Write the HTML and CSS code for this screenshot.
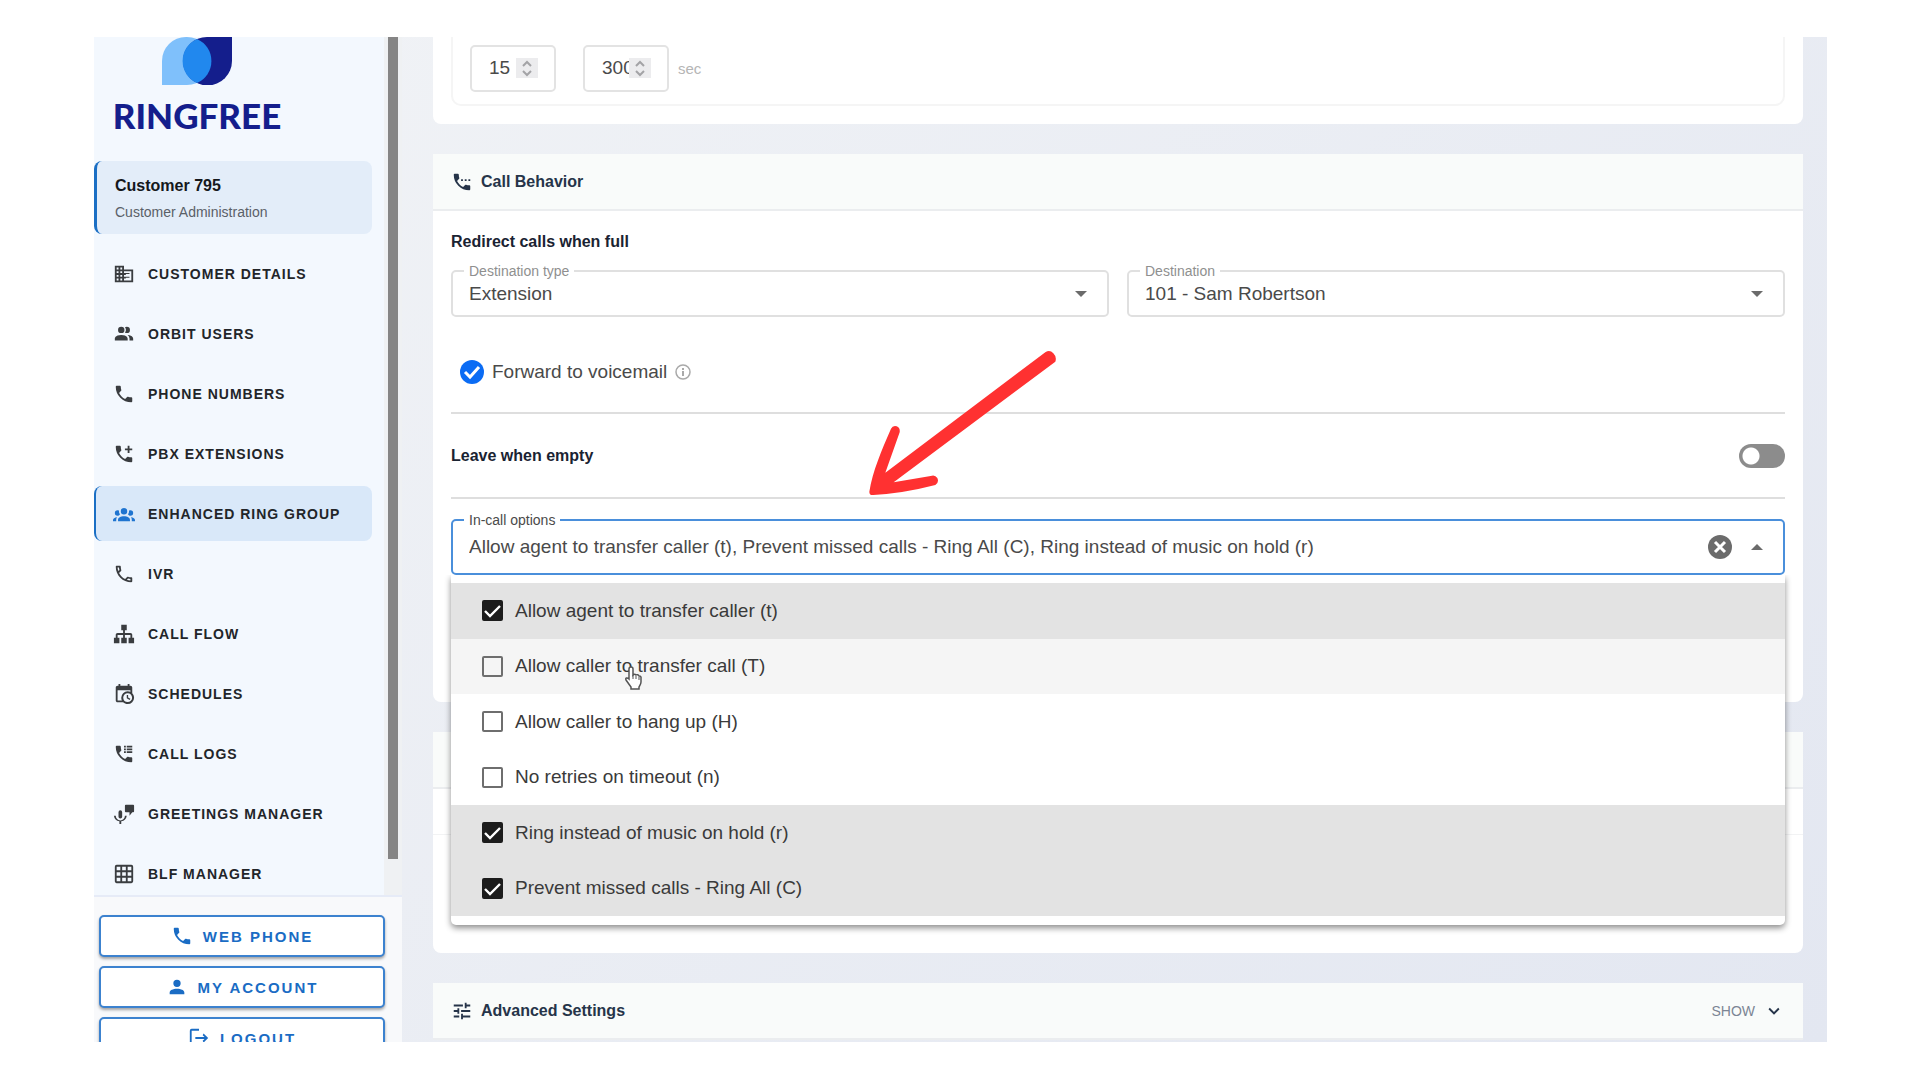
FILE: index.html
```html
<!doctype html>
<html lang="en">
<head>
	<meta charset="utf-8"/>
	<title>Ringfree - Enhanced Ring Group</title>
	<link rel="stylesheet" href="styles.css">
</head>
<body>

	<!-- shared icon shapes -->
	<svg class="sprite" aria-hidden="true">
		<symbol id="i-domain" viewBox="0 0 24 24"><path d="M12 7V3H2v18h20V7H12zM6 19H4v-2h2v2zm0-4H4v-2h2v2zm0-4H4V9h2v2zm0-4H4V5h2v2zm4 12H8v-2h2v2zm0-4H8v-2h2v2zm0-4H8V9h2v2zm0-4H8V5h2v2zm10 12h-8v-2h2v-2h-2v-2h2v-2h-2V9h8v10zm-2-8h-4v1h4v-1zm0 4h-4v1h4v-1z"/></symbol>
		<symbol id="i-users" viewBox="0 0 24 24"><path d="M16 17V19H2V17S2 13 9 13 16 17 16 17M12.5 7.5A3.5 3.5 0 1 0 9 11A3.5 3.5 0 0 0 12.5 7.5M15.94 13A5.32 5.32 0 0 1 18 17V19H22V17S22 13.37 15.94 13M15 4A3.39 3.39 0 0 0 13.07 4.59A5 5 0 0 1 13.07 10.41A3.39 3.39 0 0 0 15 11A3.5 3.5 0 0 0 15 4Z"/></symbol>
		<symbol id="i-phone" viewBox="0 0 24 24"><path d="M6.62 10.79C8.06 13.62 10.38 15.94 13.21 17.38L15.41 15.18C15.69 14.9 16.08 14.82 16.43 14.93C17.55 15.3 18.75 15.5 20 15.5A1 1 0 0 1 21 16.5V20A1 1 0 0 1 20 21A17 17 0 0 1 3 4A1 1 0 0 1 4 3H7.5A1 1 0 0 1 8.5 4C8.5 5.25 8.7 6.45 9.07 7.57C9.18 7.92 9.1 8.31 8.82 8.59L6.62 10.79Z"/></symbol>
		<symbol id="i-phone-outline" viewBox="0 0 24 24"><path d="M20,15.5C18.8,15.5 17.5,15.3 16.4,14.9C16.3,14.9 16.2,14.9 16.1,14.9C15.8,14.9 15.6,15 15.4,15.2L13.2,17.4C10.4,15.9 8,13.6 6.6,10.8L8.8,8.6C9.1,8.3 9.2,7.9 9,7.6C8.7,6.5 8.5,5.2 8.5,4C8.5,3.5 8,3 7.5,3H4C3.5,3 3,3.5 3,4C3,13.4 10.6,21 20,21C20.5,21 21,20.5 21,20V16.5C21,16 20.5,15.5 20,15.5M5,5H6.5C6.6,5.9 6.8,6.8 7,7.6L5.8,8.8C5.4,7.6 5.1,6.3 5,5M19,19C17.7,18.9 16.4,18.6 15.2,18.2L16.4,17C17.2,17.2 18.1,17.4 19,17.4V19Z"/></symbol>
		<symbol id="i-phone-plus" viewBox="0 0 24 24"><use href="#i-phone"/><path d="M13 6h3V3h2v3h3v2h-3v3h-2V8h-3z"/></symbol>
		<symbol id="i-phone-log" viewBox="0 0 24 24"><use href="#i-phone"/><path d="M12 3h2v2h-2zM15 3h6v2h-6zM12 6h2v2h-2zM15 6h6v2h-6zM12 9h2v2h-2zM15 9h6v2h-6z"/></symbol>
		<symbol id="i-phone-dots" viewBox="0 0 24 24"><use href="#i-phone"/><path d="M11 9h2v2h-2zM15 9h2v2h-2zM19 9h2v2h-2z"/></symbol>
		<symbol id="i-group" viewBox="0 0 24 24"><path d="M12 5.5A3.5 3.5 0 0 1 15.5 9A3.5 3.5 0 0 1 12 12.5A3.5 3.5 0 0 1 8.5 9A3.5 3.5 0 0 1 12 5.5M5 8C5.56 8 6.08 8.15 6.53 8.42C6.38 9.85 6.8 11.27 7.66 12.38C7.16 13.34 6.16 14 5 14A3 3 0 0 1 2 11A3 3 0 0 1 5 8M19 8A3 3 0 0 1 22 11A3 3 0 0 1 19 14C17.84 14 16.84 13.34 16.34 12.38C17.2 11.27 17.62 9.85 17.47 8.42C17.92 8.15 18.44 8 19 8M5.5 18.25C5.5 16.18 8.41 14.5 12 14.5C15.59 14.5 18.5 16.18 18.5 18.25V20H5.5V18.25M0 20V18.5C0 17.11 1.89 15.94 4.45 15.6C3.86 16.28 3.5 17.22 3.5 18.25V20H0M24 20H20.5V18.25C20.5 17.22 20.14 16.28 19.55 15.6C22.11 15.94 24 17.11 24 18.5V20Z"/></symbol>
		<symbol id="i-sitemap" viewBox="0 0 24 24"><path d="M9 2V8H11V11H5C3.89 11 3 11.89 3 13V16H1V22H7V16H5V13H11V16H9V22H15V16H13V13H19V16H17V22H23V16H21V13C21 11.89 20.11 11 19 11H13V8H15V2H9Z"/></symbol>
		<symbol id="i-schedule" viewBox="0 0 24 24"><path d="M15 13H16.5V15.82L18.94 17.23L18.19 18.53L15 16.69V13M19 8H5V19H9.67C9.24 18.09 9 17.07 9 16A7 7 0 0 1 16 9C17.07 9 18.09 9.24 19 9.67V8M5 21C3.89 21 3 20.1 3 19V5C3 3.89 3.89 3 5 3H6V1H8V3H16V1H18V3H19A2 2 0 0 1 21 5V11.1C22.24 12.36 23 14.09 23 16A7 7 0 0 1 16 23C14.09 23 12.36 22.24 11.1 21H5M16 11.15A4.85 4.85 0 0 0 11.15 16C11.15 18.68 13.32 20.85 16 20.85A4.85 4.85 0 0 0 20.85 16C20.85 13.32 18.68 11.15 16 11.15Z"/></symbol>
		<symbol id="i-mic" viewBox="0 0 24 24"><path d="M14 2h8a1 1 0 0 1 1 1v6a1 1 0 0 1-1 1h-1l-3 4v-4h-4a1 1 0 0 1-1-1V3a1 1 0 0 1 1-1zM8 8a2 2 0 0 1 2 2v5a2 2 0 0 1-4 0v-5a2 2 0 0 1 2-2zM1 14h2a5 5 0 0 0 10 0h2a7 7 0 0 1-6 6v3H7v-3a7 7 0 0 1-6-6z"/></symbol>
		<symbol id="i-grid" viewBox="0 0 24 24"><path d="M10 4v4h4V4h-4m6 0v4h4V4h-4m0 6v4h4v-4h-4m0 6v4h4v-4h-4m-2 4v-4h-4v4h4m-6 0v-4H4v4h4m0-6v-4H4v4h4m0-6V4H4v4h4m2 6h4v-4h-4v4M4 2h16a2 2 0 0 1 2 2v16a2 2 0 0 1-2 2H4c-1.08 0-2-.9-2-2V4a2 2 0 0 1 2-2z"/></symbol>
		<symbol id="i-account" viewBox="0 0 24 24"><path d="M12 4a4 4 0 0 1 0 8 4 4 0 0 1 0-8m0 10c4.42 0 8 1.79 8 4v2H4v-2c0-2.21 3.58-4 8-4"/></symbol>
		<symbol id="i-logout" viewBox="0 0 24 24"><path d="M12 2v2H4v16h8v2H4a2 2 0 0 1-2-2V4a2 2 0 0 1 2-2zM17 7l5 5-5 5-1-2 2-2H8v-2h10l-2-2z"/></symbol>
		<symbol id="i-tune" viewBox="0 0 24 24"><path d="M3 17v2h6v-2H3zM3 5v2h10V5H3zm10 16v-2h8v-2h-8v-2h-2v6h2zM7 9v2H3v2h4v2h2V9H7zm14 4v-2H11v2h10zm-6-4h2V7h4V5h-4V3h-2v6z"/></symbol>
		<symbol id="i-chevron" viewBox="0 0 24 24"><path d="M7.41 8.58L12 13.17l4.59-4.59L18 10l-6 6-6-6z"/></symbol>
		<symbol id="i-spin" viewBox="0 0 22 20"><path d="M7 8l4-4 4 4M7 13l4 4 4-4" fill="none" stroke="#a3a3a6" stroke-width="2"/></symbol>
	</svg>

	<div class="app">
		<aside class="sidebar">
			<div class="sidebar-scroll">
				<div class="sidebar-content">
					<div class="logo">
						<svg class="logo-mark" viewBox="0 0 70 48">
							<path fill="#7fc0fb" d="M0 48V24A24 24 0 0 1 24 0h1a24 24 0 0 1 0 48z"/>
							<path fill="#141e8c" d="M70 0v24a24 24 0 0 1-49 0A24 24 0 0 1 45 0z"/>
							<path fill="#2188ee" d="M35 2a24 24 0 0 1 0 44 24 24 0 0 1 0-44z"/>
						</svg>
						<span class="logo-text">RINGFREE</span>
					</div>
					<div class="customer">
						<strong>Customer 795</strong>
						<span>Customer Administration</span>
					</div>
					<nav class="menu">
						<a href="#"><svg><use href="#i-domain"/></svg>CUSTOMER DETAILS</a>
						<a href="#"><svg><use href="#i-users"/></svg>ORBIT USERS</a>
						<a href="#"><svg><use href="#i-phone"/></svg>PHONE NUMBERS</a>
						<a href="#"><svg><use href="#i-phone-plus"/></svg>PBX EXTENSIONS</a>
						<a href="#" class="active"><svg><use href="#i-group"/></svg>ENHANCED RING GROUP</a>
						<a href="#"><svg><use href="#i-phone-outline"/></svg>IVR</a>
						<a href="#"><svg><use href="#i-sitemap"/></svg>CALL FLOW</a>
						<a href="#"><svg><use href="#i-schedule"/></svg>SCHEDULES</a>
						<a href="#"><svg><use href="#i-phone-log"/></svg>CALL LOGS</a>
						<a href="#"><svg><use href="#i-mic"/></svg>GREETINGS MANAGER</a>
						<a href="#"><svg><use href="#i-grid"/></svg>BLF MANAGER</a>
					</nav>
				</div>
				<div class="scroll-track"><div class="scroll-thumb"></div></div>
			</div>
			<div class="sidebar-actions">
				<button type="button"><svg><use href="#i-phone"/></svg>WEB PHONE</button>
				<button type="button"><svg><use href="#i-account"/></svg>MY ACCOUNT</button>
				<button type="button"><svg><use href="#i-logout"/></svg>LOGOUT</button>
			</div>
		</aside>

		<main class="content">
			<section class="card card-first">
				<div class="timing">
					<div class="number">
						<input type="number" value="15" aria-label="Ring time">
						<svg><use href="#i-spin"/></svg>
					</div>
					<div class="number">
						<input type="number" value="300" aria-label="Maximum wait">
						<svg><use href="#i-spin"/></svg>
					</div>
					<span class="unit">sec</span>
				</div>
			</section>

			<section class="card">
				<h2 class="card-header"><svg><use href="#i-phone-dots"/></svg>Call Behavior</h2>
				<div class="card-body">
					<h3>Redirect calls when full</h3>
					<div class="fields">
						<div class="field">
							<label for="dest-type">Destination type</label>
							<select id="dest-type"><option>Extension</option></select>
							<svg class="caret" viewBox="0 0 12 6"><path d="M0 0h12L6 6z"/></svg>
						</div>
						<div class="field">
							<label for="dest">Destination</label>
							<select id="dest"><option>101 - Sam Robertson</option></select>
							<svg class="caret" viewBox="0 0 12 6"><path d="M0 0h12L6 6z"/></svg>
						</div>
					</div>
					<div class="voicemail">
						<input type="checkbox" id="voicemail" checked>
						<label for="voicemail">Forward to voicemail</label>
						<svg class="info" viewBox="0 0 16 16"><circle cx="8" cy="8" r="7" fill="none" stroke="#a9a9a9" stroke-width="1.5"/><path d="M7 7h2v5H7zM7 4h2v2H7z"/></svg>
					</div>
					<div class="leave">
						<label for="leave">Leave when empty</label>
						<input type="checkbox" role="switch" id="leave">
					</div>
					<div class="field field-focus">
						<label for="options">In-call options</label>
						<input type="text" id="options" readonly value="Allow agent to transfer caller (t), Prevent missed calls - Ring All (C), Ring instead of music on hold (r)">
						<button type="button" class="clear" aria-label="Clear">
							<svg viewBox="0 0 24 24"><circle cx="12" cy="12" r="12" fill="#6b6b6b"/><path d="M7 7l10 10M17 7L7 17" stroke="#fff" stroke-width="3"/></svg>
						</button>
						<svg class="caret" viewBox="0 0 12 6"><path d="M0 6h12L6 0z"/></svg>
						<div class="dropdown">
							<label class="option selected"><input type="checkbox" checked>Allow agent to transfer caller (t)</label>
							<label class="option hovered"><input type="checkbox">Allow caller to transfer call (T)
								<svg class="pointer" viewBox="0 0 18 24"><path d="M5 13V3a2 2 0 0 1 4 0v6a2 2 0 0 1 3 0 2 2 0 0 1 3 1 2 2 0 0 1 2 1v5c0 2-1 3-2 5v2H7v-2l-5-7c-1-2 1-3 3-1z" fill="#fff" stroke="#555" stroke-width="1.5"/><path d="M9 9v4M12 10v3M15 11v3" stroke="#555" stroke-width="1"/></svg>
							</label>
							<label class="option"><input type="checkbox">Allow caller to hang up (H)</label>
							<label class="option"><input type="checkbox">No retries on timeout (n)</label>
							<label class="option selected"><input type="checkbox" checked>Ring instead of music on hold (r)</label>
							<label class="option selected"><input type="checkbox" checked>Prevent missed calls - Ring All (C)</label>
						</div>
						<svg class="arrow" viewBox="0 0 660 510"><path fill="#ff3131" d="M557 36Q570 29 580 40Q591 51 586 65L101 427L212 408Q225 403 232 414Q238 428 226 435Q130 460 40 465Q28 467 28 455C38 393 64 333 93 266Q98 256 110 259Q121 263 119 277L76 398Z"/></svg>
					</div>
				</div>
			</section>

			<section class="card">
				<div class="card-header"></div>
				<div class="card-toolbar"></div>
				<div class="card-rows"></div>
			</section>

			<section class="card">
				<h2 class="card-header"><svg><use href="#i-tune"/></svg>Advanced Settings
					<button type="button" class="show">SHOW<svg><use href="#i-chevron"/></svg></button>
				</h2>
			</section>
		</main>
	</div>

</body>
</html>
```

FILE: styles.css
```css
* {
	box-sizing: border-box;
}
body {
	margin: 0;
	padding: 37px 93px 38px 94px;
	height: 100vh;
	background: #fff;
	font-family: "Liberation Sans", Arial, sans-serif;
	font-size: 19px;
	color: #4a4a4a;
}
svg {
	fill: currentColor;
	flex: none;
}
button, input, select {
	font-family: inherit;
	color: inherit;
}
h2, h3 {
	margin: 0;
	font-size: 16px;
}
.sprite {
	display: none;
}
.app {
	display: flex;
	height: 100%;
	overflow: hidden;
	background: linear-gradient(135deg, #f1f3f6, #e3e7f1);
}

/* sidebar */
.sidebar {
	display: flex;
	flex-direction: column;
	flex: none;
	width: 308px;
	background: #f8f9fb;
}
.sidebar-scroll {
	display: flex;
	height: 860px;
	flex: none;
	background: #f3f8fe;
	border-bottom: 2px solid #e6ebf7;
	overflow: hidden;
}
.sidebar-content {
	flex: 1;
	padding-right: 12px;
}
.scroll-track {
	width: 18px;
	padding: 0 4px 36px;
	background: #eff1f3;
}
.scroll-thumb {
	height: 100%;
	background: #858585;
}
.logo {
	display: flex;
	flex-direction: column;
	align-items: center;
	width: 206px;
	height: 124px;
}
.logo-mark {
	width: 70px;
	height: 48px;
}
.logo-text {
	margin-top: 10px;
	font-family: Lato, sans-serif;
	font-weight: 900;
	font-size: 35px;
	line-height: 40px;
	color: #141e8c;
}
.customer {
	display: flex;
	flex-direction: column;
	gap: 8px;
	height: 73px;
	padding: 16px 18px;
	border-left: 3px solid #1b6fc4;
	border-radius: 8px;
	background: #e3edf9;
	font-size: 14px;
	line-height: 18px;
	color: #5a6068;
}
.customer strong {
	font-size: 16px;
	color: #15181c;
}
.menu {
	display: flex;
	flex-direction: column;
	gap: 5px;
	margin-top: 12px;
}
.menu a {
	display: flex;
	align-items: center;
	gap: 13px;
	height: 55px;
	padding-left: 17px;
	border-left: 2px solid transparent;
	border-radius: 8px;
	font-size: 14px;
	font-weight: bold;
	letter-spacing: 1px;
	color: #222529;
	text-decoration: none;
}
.menu svg {
	width: 22px;
	height: 22px;
	color: #3a3d40;
}
.menu .active {
	background: #d9e8f9;
	border-left-color: #1b6fc4;
}
.menu .active svg {
	color: #1f74d0;
}
.sidebar-actions {
	display: flex;
	flex-direction: column;
	gap: 9px;
	padding: 18px 17px 0 5px;
}
.sidebar-actions button {
	display: flex;
	align-items: center;
	justify-content: center;
	gap: 10px;
	flex: none;
	height: 42px;
	border: 2px solid #3c82cf;
	border-radius: 5px;
	background: #fff;
	box-shadow: 0 2px 3px rgba(0, 0, 0, 0.35);
	font-size: 15px;
	font-weight: bold;
	letter-spacing: 2px;
	color: #1a6cc4;
}
.sidebar-actions svg {
	width: 22px;
	height: 22px;
}

/* cards */
.content {
	display: flex;
	flex-direction: column;
	gap: 30px;
	flex: 1;
	min-width: 0;
	padding: 0 24px 0 31px;
}
.card {
	flex: none;
	background: #fff;
	border-radius: 4px 4px 8px 8px;
}
.card-first {
	padding: 0 18px 18px;
	border-radius: 0 0 8px 8px;
}
.card-header {
	display: flex;
	align-items: center;
	gap: 8px;
	height: 57px;
	padding: 0 18px;
	border-bottom: 2px solid #ebedef;
	background: #f9fbfa;
	color: #263449;
}
.card-header svg {
	width: 22px;
	height: 22px;
}
.card-body {
	padding: 21px 18px 127px;
}
.card-body h3, .leave label {
	font-size: 16px;
	font-weight: bold;
	line-height: 20px;
	color: #1a2332;
}
.card-toolbar {
	height: 46px;
	border-bottom: 1px solid #f2f3f4;
}
.card-rows {
	height: 118px;
}
.timing {
	display: flex;
	align-items: center;
	height: 69px;
	padding: 0 17px 5px;
	border: 2px solid #f5f5f5;
	border-top: none;
	border-radius: 0 0 10px 10px;
}
.number {
	display: grid;
	width: 86px;
	height: 47px;
	margin-right: 27px;
}
.number input, .number svg {
	grid-area: 1 / 1;
}
.number input {
	width: 100%;
	padding: 0 17px;
	border: 2px solid #e3e3e3;
	border-radius: 5px;
	background: none;
	font-size: 19px;
	appearance: textfield;
}
.number input::-webkit-inner-spin-button {
	display: none;
}
.number svg {
	align-self: center;
	justify-self: end;
	width: 22px;
	height: 20px;
	margin-right: 18px;
	background: #ececee;
}
.unit {
	margin-left: -18px;
	font-size: 15px;
	color: #b5b5b5;
}

/* outlined fields */
.fields {
	display: grid;
	grid-template-columns: 1fr 1fr;
	gap: 18px;
	margin-top: 18px;
}
.field {
	position: relative;
	display: flex;
	align-items: center;
	height: 47px;
	border: 2px solid #e0e0e0;
	border-radius: 5px;
}
.field > label {
	position: absolute;
	top: -10px;
	left: 11px;
	padding: 0 5px;
	background: #fff;
	font-size: 14px;
	line-height: 18px;
	color: #8f8f8f;
}
.field select, .field > input {
	flex: 1;
	min-width: 0;
	height: 100%;
	padding: 0 16px;
	border: none;
	outline: none;
	background: none;
	appearance: none;
	font-size: 19px;
}
.caret {
	width: 12px;
	height: 6px;
	margin-right: 20px;
	color: #6b6b6b;
}
.field-focus {
	height: 56px;
	margin-top: 20px;
	border-color: #4a8fdb;
}
.field-focus > label {
	color: #4a4a4a;
}
.clear {
	width: 24px;
	height: 24px;
	margin-right: 19px;
	padding: 0;
	border: none;
	background: none;
}
.clear svg {
	display: block;
}
.voicemail {
	display: flex;
	align-items: center;
	gap: 8px;
	height: 97px;
	padding: 14px 9px 0;
	border-bottom: 2px solid #dedede;
}
.voicemail input {
	width: 24px;
	height: 24px;
	margin: 0;
	appearance: none;
	border-radius: 50%;
	background: #0b6cf4 url("data:image/svg+xml,%3Csvg xmlns='http://www.w3.org/2000/svg' viewBox='0 0 24 24'%3E%3Cpath d='M5 12l5 5 9-10' fill='none' stroke='white' stroke-width='3'/%3E%3C/svg%3E");
}
.info {
	width: 16px;
	height: 16px;
	color: #a9a9a9;
}
.leave {
	display: flex;
	align-items: center;
	justify-content: space-between;
	height: 85px;
	border-bottom: 2px solid #dedede;
}
.leave input {
	width: 46px;
	height: 24px;
	margin: 0;
	appearance: none;
	border-radius: 12px;
	background: radial-gradient(circle at 12px 12px, #fff 8px, #8c8c8c 9px);
}

/* open list of options */
.dropdown {
	position: absolute;
	z-index: 2;
	top: 100%;
	left: -2px;
	right: -2px;
	display: grid;
	grid-auto-rows: 1fr;
	height: 350px;
	padding: 8px 0 9px;
	margin-top: 2px;
	border-radius: 0 0 5px 5px;
	background: #fff;
	box-shadow: 0 3px 6px rgba(0, 0, 0, 0.45);
	color: #3a3a3a;
	clip-path: inset(0 -12px -12px -12px);
}
.option {
	position: relative;
	display: flex;
	align-items: center;
	gap: 12px;
	padding-left: 31px;
}
.option input {
	width: 21px;
	height: 21px;
	margin: 0;
	appearance: none;
	border: 2px solid #6e6e6e;
	border-radius: 2px;
}
.option input:checked {
	border-color: #1c1c1c;
	background: #1c1c1c url("data:image/svg+xml,%3Csvg xmlns='http://www.w3.org/2000/svg' viewBox='0 0 17 17'%3E%3Cpath d='M1 9l5 5L16 4' fill='none' stroke='white' stroke-width='2.4'/%3E%3C/svg%3E");
}
.selected {
	background: #e3e3e3;
}
.hovered {
	background: #f5f5f5;
}
.pointer {
	position: absolute;
	top: 27px;
	left: 173px;
	width: 18px;
	height: 24px;
}
.arrow {
	position: absolute;
	z-index: 3;
	left: 407px;
	bottom: 63px;
	width: 220px;
	height: 170px;
}

.show {
	display: flex;
	align-items: center;
	gap: 8px;
	margin-left: auto;
	padding: 0;
	border: none;
	background: none;
	font-size: 14px;
	color: #7c8594;
}
.show svg {
	color: #263449;
}
```
